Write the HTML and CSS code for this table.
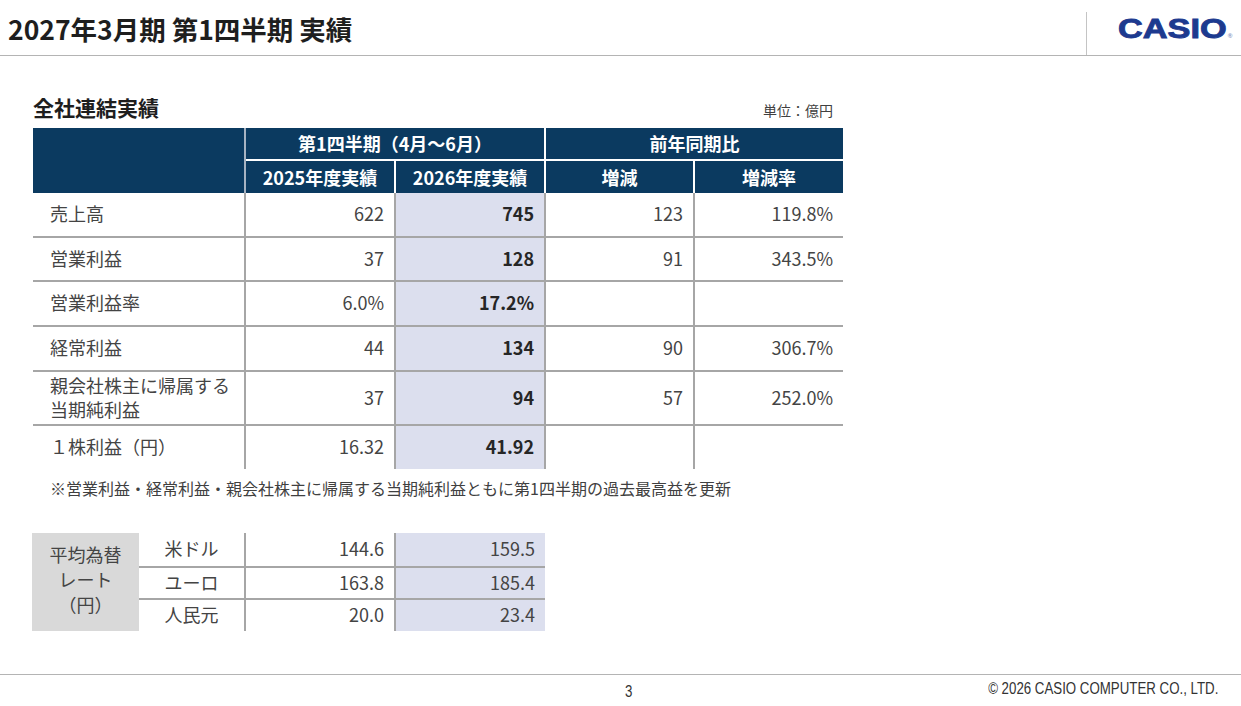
FILE: index.html
```html
<!DOCTYPE html>
<html lang="ja">
<head>
<meta charset="utf-8">
<title>2027年3月期 第1四半期 実績</title>
<link rel="stylesheet" href="styles.css">
</head>
<body>
<div class="page">
  <header class="topbar">
    <h1 class="title">2027年3月期 第1四半期 実績</h1>
    <div class="brand"><span class="logo">CASIO<span class="reg">®</span></span></div>
  </header>

  <main class="content">
    <div class="section-head">
      <h2 class="section-title">全社連結実績</h2>
      <span class="unit">単位：億円</span>
    </div>

    <table class="results">
      <colgroup>
        <col class="c-label">
        <col class="c-num">
        <col class="c-num">
        <col class="c-diff">
        <col class="c-diff">
      </colgroup>
      <thead>
        <tr class="hrow1">
          <th rowspan="2" class="blank"></th>
          <th colspan="2">第1四半期（4月～6月）</th>
          <th colspan="2" class="grp">前年同期比</th>
        </tr>
        <tr class="hrow2">
          <th>2025年度実績</th>
          <th class="sep">2026年度実績</th>
          <th class="sep">増減</th>
          <th class="sep">増減率</th>
        </tr>
      </thead>
      <tbody>
        <tr class="r44">
          <td class="label">売上高</td><td class="num">622</td><td class="num cur">745</td><td class="num">123</td><td class="num">119.8%</td>
        </tr>
        <tr class="r44">
          <td class="label">営業利益</td><td class="num">37</td><td class="num cur">128</td><td class="num">91</td><td class="num">343.5%</td>
        </tr>
        <tr class="r45">
          <td class="label">営業利益率</td><td class="num">6.0%</td><td class="num cur">17.2%</td><td class="num"></td><td class="num"></td>
        </tr>
        <tr class="r45">
          <td class="label">経常利益</td><td class="num">44</td><td class="num cur">134</td><td class="num">90</td><td class="num">306.7%</td>
        </tr>
        <tr class="r-tall">
          <td class="label two"><span class="ln">親会社株主に帰属する</span><span class="ln">当期純利益</span></td><td class="num">37</td><td class="num cur">94</td><td class="num">57</td><td class="num">252.0%</td>
        </tr>
        <tr class="r44">
          <td class="label">１株利益（円）</td><td class="num">16.32</td><td class="num cur">41.92</td><td class="num"></td><td class="num"></td>
        </tr>
      </tbody>
    </table>

    <p class="note">※営業利益・経常利益・親会社株主に帰属する当期純利益ともに第1四半期の過去最高益を更新</p>

    <table class="fx">
      <colgroup>
        <col class="f-box">
        <col class="f-cur">
        <col class="f-num">
        <col class="f-num">
      </colgroup>
      <tbody>
        <tr class="fr1">
          <td rowspan="3" class="box">平均為替<br>レート<br>（円）</td>
          <td class="ccy">米ドル</td><td class="num">144.6</td><td class="num cur">159.5</td>
        </tr>
        <tr class="fr2">
          <td class="ccy">ユーロ</td><td class="num">163.8</td><td class="num cur">185.4</td>
        </tr>
        <tr class="fr3">
          <td class="ccy">人民元</td><td class="num">20.0</td><td class="num cur">23.4</td>
        </tr>
      </tbody>
    </table>
  </main>

  <footer class="footer">
    <span class="pageno">3</span>
    <span class="copy">© 2026 CASIO COMPUTER CO., LTD.</span>
  </footer>
</div>
</body>
</html>
```

FILE: styles.css
```css
* { box-sizing: border-box; }

html, body {
  margin: 0;
  padding: 0;
}

body {
  width: 1241px;
  height: 706px;
  overflow: hidden;
  background: #ffffff;
  color: #404040;
  font-family: "Noto Sans CJK JP", "Noto Sans", sans-serif;
}

.page {
  display: flex;
  flex-direction: column;
  height: 706px;
}

/* ---------- top bar ---------- */
.topbar {
  display: flex;
  justify-content: space-between;
  align-items: flex-start;
  height: 56px;
  border-bottom: 1px solid #b4b4b4;
}

.title {
  margin: 0;
  padding: 12px 0 0 8px;
  font-size: 26.5px;
  line-height: 34px;
  font-weight: 700;
  color: #1e1e1e;
}

.brand {
  margin-top: 12px;
  width: 155px;
  height: 43px;
  border-left: 1px solid #c4c4c4;
  padding: 2px 0 0 31px;
}

.logo {
  display: inline-block;
  font-family: "Liberation Sans", Arial, sans-serif;
  font-weight: 700;
  font-size: 27px;
  line-height: 30px;
  color: #1d3a8f;
  -webkit-text-stroke: 0.9px #1d3a8f;
  transform: scaleX(1.27);
  transform-origin: left center;
}

.reg {
  font-size: 5px;
  -webkit-text-stroke: 0;
  color: #8797c4;
  margin-left: 1px;
}

/* ---------- content ---------- */
.content {
  padding: 38px 0 0 33px;
}

.section-head {
  width: 810px;
  display: flex;
  justify-content: space-between;
  align-items: flex-end;
  padding-bottom: 8px;
}

.section-title {
  margin: 0;
  font-size: 21px;
  line-height: 26px;
  font-weight: 700;
  color: #1e1e1e;
}

.unit {
  font-size: 14px;
  line-height: 20px;
  padding-right: 10px;
  color: #404040;
}

/* ---------- results table ---------- */
.results {
  width: 810px;
  border-collapse: collapse;
  table-layout: fixed;
  font-size: 18px;
}

.c-label { width: 212px; }
.c-num { width: 150px; }
.c-diff { width: 149px; }

.results th {
  background: #0b3a60;
  color: #ffffff;
  font-weight: 700;
  font-size: 18px;
  line-height: 22px;
  padding: 0 0 1px;
  text-align: center;
}

.hrow1 { height: 32px; }
.hrow2 { height: 33px; }

.results th.blank {
  border-right: 2px solid #a7b3c2;
}

.results th.grp {
  border-left: 2px solid #ffffff;
}

.hrow2 th {
  border-top: 2px solid #ffffff;
}

.hrow2 th.sep {
  border-left: 2px solid #ffffff;
}

.results td {
  padding: 0 0 3px;
  color: #444444;
  line-height: 24px;
}

.results tbody tr.r44 { height: 44px; }
.results tbody tr.r45 { height: 45px; }
.results tbody tr.r-tall { height: 54px; }

.results tbody tr + tr td {
  border-top: 2px solid #a6a6a6;
}

.results td + td {
  border-left: 2px solid #a6a6a6;
}

.results td.label {
  padding-left: 17px;
  text-align: left;
}

.results td.label.two {
  padding-bottom: 2px;
}

.results .ln {
  display: block;
  height: 26px;
  line-height: 26px;
  white-space: nowrap;
}

.results .ln + .ln {
  margin-top: -2px;
}

.results td.num {
  text-align: right;
  padding-right: 10px;
}

.results td.cur {
  background: #dcdfee;
  font-weight: 700;
  color: #262626;
}

/* ---------- note ---------- */
.note {
  margin: 8px 0 0 17px;
  font-size: 16px;
  line-height: 22px;
  color: #404040;
}

/* ---------- fx table ---------- */
.fx {
  margin: 34px 0 0 -1px;
  width: 513px;
  border-collapse: collapse;
  table-layout: fixed;
  font-size: 18px;
}

.f-box { width: 107px; }
.f-cur { width: 106px; }
.f-num { width: 150px; }

.fr1 { height: 34px; }
.fr2 { height: 32px; }
.fr3 { height: 32px; }

.fx td {
  padding: 0 0 3px;
  line-height: 24px;
  color: #444444;
}

.fx td.box {
  background: #d9d9d9;
  text-align: center;
  line-height: 25px;
  padding-bottom: 5px;
}

.fx tr + tr td {
  border-top: 2px solid #a6a6a6;
}

.fx td.ccy {
  text-align: center;
}

.fx td.num {
  text-align: right;
  padding-right: 10px;
  border-left: 2px solid #a6a6a6;
}

.fx td.cur {
  background: #dcdfee;
}

/* ---------- footer ---------- */
.footer {
  margin-top: auto;
  height: 32px;
  border-top: 1px solid #b4b4b4;
  display: flex;
  align-items: flex-start;
  font-family: "Liberation Sans", Arial, sans-serif;
  color: #333333;
}

.pageno {
  display: inline-block;
  margin-left: 625px;
  padding-top: 8px;
  font-size: 16px;
  line-height: 18px;
  transform: scaleX(0.83);
  transform-origin: left center;
}

.copy {
  display: inline-block;
  margin-left: auto;
  margin-right: 23px;
  padding-top: 5px;
  font-size: 16px;
  line-height: 18px;
  transform: scaleX(0.83);
  transform-origin: right center;
}
```
